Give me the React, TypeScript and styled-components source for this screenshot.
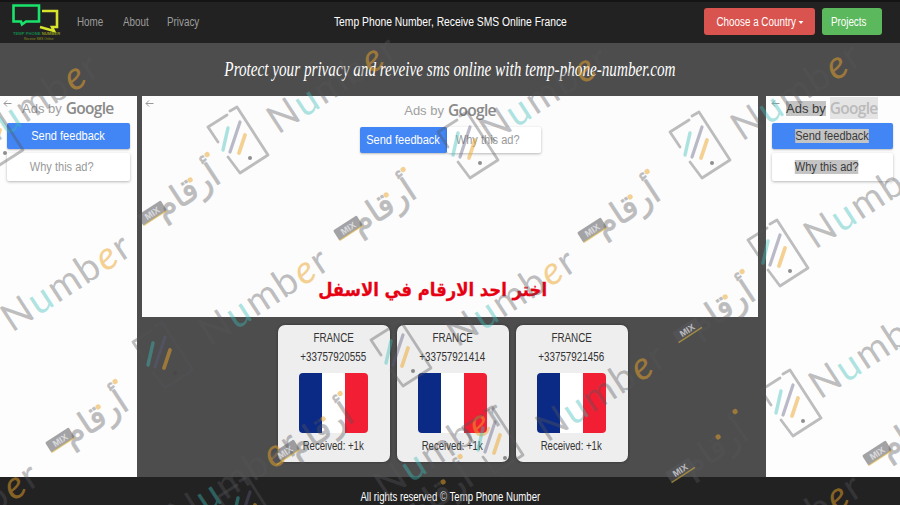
import React from "react";
import styled, { createGlobalStyle } from "styled-components";

const Global = createGlobalStyle`
  html, body { margin: 0; padding: 0; background: #4d4d4d; }
  * { box-sizing: border-box; }
`;

const Page = styled.div`
  position: relative;
  width: 900px;
  height: 505px;
  overflow: hidden;
  display: flex;
  flex-direction: column;
  background: #4d4d4d;
  font-family: "Liberation Sans", Arial, sans-serif;
`;

/* The reference is a horizontally squeezed capture: text keeps its height, loses width. */
const Squeeze = styled.span<{ $x?: number; $origin?: string }>`
  display: inline-block;
  white-space: nowrap;
  transform: scaleX(${(p) => p.$x ?? 0.82});
  transform-origin: ${(p) => p.$origin ?? "center"};
`;

const Header = styled.header`
  height: 43px;
  flex: none;
  display: grid;
  grid-template-columns: 1fr auto 1fr;
  align-items: center;
  background: #222;
  border-top: 2px solid #141414;
  padding: 0 18px 2px;
`;

const HeaderLeft = styled.div`
  display: flex;
  align-items: center;
  margin-left: -8px;
`;

const Nav = styled.nav`
  display: flex;
  gap: 13.5px;
  margin-left: 13px;
  font-size: 12px;
  color: #9d9d9d;
`;

const HeaderTitle = styled.div`
  color: #fff;
  font-size: 12px;
  display: flex;
  justify-content: center;
`;

const HeaderActions = styled.div`
  display: flex;
  justify-content: flex-end;
  gap: 7px;
`;

const ActionButton = styled.div<{ $tone: "red" | "green"; $w: number; $pr: number }>`
  width: ${(p) => p.$w}px;
  height: 27px;
  display: flex;
  align-items: center;
  justify-content: center;
  padding-right: ${(p) => p.$pr}px;
  border-radius: 3px;
  color: #fff;
  font-size: 12px;
  background: ${(p) => (p.$tone === "red" ? "#d9534f" : "#5cb85c")};
`;

const Caret = styled.span`
  display: inline-block;
  width: 0;
  height: 0;
  margin-left: 3px;
  vertical-align: middle;
  border-left: 3.5px solid transparent;
  border-right: 3.5px solid transparent;
  border-top: 3.5px solid #fff;
`;

const Band = styled.div`
  height: 53px;
  flex: none;
  display: flex;
  align-items: center;
  justify-content: center;
  padding-bottom: 1px;
  color: #fff;
  font-family: "Liberation Serif", serif;
  font-style: italic;
  font-weight: 400;
  font-size: 22px;
`;

const Main = styled.main`
  flex: 1;
  min-height: 0;
  display: grid;
  grid-template-columns: 137px 1fr 134px;
`;

const SideAd = styled.aside<{ $side: "left" | "right" }>`
  background: #fdfdfd;
  padding: ${(p) => (p.$side === "left" ? "0 7px" : "0 7px 0 6px")};
  position: relative;
`;

const CentreColumn = styled.div`
  display: flex;
  flex-direction: column;
  padding: 0 8px 0 5px;
`;

const CentreAd = styled.section`
  height: 221px;
  flex: none;
  background: #fcfcfc;
  position: relative;
  display: flex;
  flex-direction: column;
  align-items: center;
  padding-top: 2px;
`;

const BackArrow = styled.svg<{ $left: number }>`
  position: absolute;
  left: ${(p) => p.$left}px;
  top: 3px;
  width: 9px;
  height: 9px;
`;

const AdsBy = styled.div<{ $pad?: number }>`
  height: 24px;
  display: flex;
  align-items: center;
  gap: 4px;
  padding-left: ${(p) => p.$pad ?? 0}px;
  color: #a0a0a0;
  font-size: 13px;
`;

const Google = styled.span`
  font-family: "Open Sans", sans-serif;
  font-size: 15.5px;
  font-weight: 600;
  letter-spacing: -0.7px;
  color: #8a8a8a;
`;

const Marked = styled.span`
  background: #e4e4e4;
  color: #bbb;
`;

const MarkedDark = styled.span`
  color: #3a3a3a;
  background: #c4c4c4;
`;

const FeedbackStack = styled.div`
  display: flex;
  flex-direction: column;
  gap: 4px;
  margin-top: 3px;
`;

const FeedbackRow = styled.div`
  display: flex;
  margin-top: 5px;
`;

const Feedback = styled.div<{ $w?: number; $h: number }>`
  width: ${(p) => (p.$w ? `${p.$w}px` : "100%")};
  height: ${(p) => p.$h}px;
  display: flex;
  align-items: center;
  justify-content: center;
  background: #4285f4;
  color: #fff;
  font-size: 12px;
  border-radius: 2px;
  box-shadow: 0 1px 2px rgba(0, 0, 0, 0.25);
`;

const WhyAd = styled.div<{ $w?: number; $h: number; $pr: number }>`
  width: ${(p) => (p.$w ? `${p.$w}px` : "100%")};
  height: ${(p) => p.$h}px;
  display: flex;
  align-items: center;
  justify-content: center;
  padding-right: ${(p) => p.$pr}px;
  background: #fff;
  color: #999;
  font-size: 12px;
  border-radius: 2px;
  box-shadow: 0 1px 3px rgba(0, 0, 0, 0.28);
`;

const PickHeading = styled.h2`
  margin: auto 34px 15px 0;
  direction: rtl;
  color: #e60012;
  font-family: "DejaVu Sans", sans-serif;
  font-size: 18.5px;
  font-weight: 700;
  line-height: 24px;
  transform: scaleX(0.89);
  -webkit-text-stroke: 0.3px #e60012;
`;

const Cards = styled.div`
  flex: 1;
  display: flex;
  justify-content: center;
  gap: 7px;
  padding: 8px 0 0 5px;
`;

const Card = styled.article`
  width: 112px;
  height: 137px;
  display: flex;
  flex-direction: column;
  align-items: center;
  padding-top: 6px;
  background: #eee;
  border-radius: 7px;
  box-shadow: 0 0 3px rgba(0, 0, 0, 0.4);
  color: #333;
  font-size: 12px;
  line-height: 14px;
`;

const CardPhone = styled.div`
  margin-top: 5px;
`;

const Flag = styled.div`
  width: 69px;
  height: 60px;
  margin-top: 9px;
  border-radius: 4px;
  overflow: hidden;
  display: grid;
  grid-template-columns: 1fr 1fr 1fr;
`;

const Stripe = styled.span<{ $c: string }>`
  background: ${(p) => p.$c};
`;

const Received = styled.div`
  margin-top: 6px;
`;

const Footer = styled.footer`
  height: 28px;
  flex: none;
  display: flex;
  align-items: flex-end;
  justify-content: center;
  padding-bottom: 1px;
  background: #222;
  color: #fff;
  font-size: 12px;
`;

const WatermarkSvg = styled.svg`
  position: absolute;
  inset: 0;
  width: 900px;
  height: 505px;
  pointer-events: none;
`;

const Logo = () => (
  <svg width="54" height="39" viewBox="0 0 54 39" style={{ display: "block" }}>
    <path d="M3.5 3.5h25.5v16H16l-4 3-1-3H3.5z" fill="none" stroke="#19e36a" strokeWidth="2.6" />
    <path d="M32 9h15v16h-5l2 4-14-4" fill="none" stroke="#d8e32c" strokeWidth="2.6" />
    <text x="3" y="33" fontSize="4.2" fill="#12854a" fontFamily="Liberation Sans" fontWeight="700">
      TEMP PHONE <tspan fill="#8c9420">NUMBER</tspan>
    </text>
    <text x="14" y="38" fontSize="3.2" fill="#8c9420" fontFamily="Liberation Sans">
      Receive SMS Online
    </text>
  </svg>
);

const Arrow = ({ left }: { left: number }) => (
  <BackArrow $left={left} viewBox="0 0 9 9">
    <path d="M8.5 4.5H1M4 1.5l-3 3 3 3" fill="none" stroke="#999" strokeWidth="1" />
  </BackArrow>
);

const GREY = "rgba(85,85,90,0.38)";
const TEAL = "rgba(60,190,185,0.42)";
const ORANGE = "rgba(235,165,40,0.5)";

const WmNumber = ({ x, y }: { x: number; y: number }) => (
  <text
    transform={`translate(${x} ${y}) rotate(-33)`}
    fontFamily="Lato, sans-serif"
    fontSize="39"
    fontWeight="400"
    letterSpacing="1.5"
    fill={GREY}
  >
    N<tspan fill={TEAL}>u</tspan>mb<tspan fill={ORANGE} fontStyle="italic">e</tspan>r
  </text>
);

const WmArabic = ({ x, y }: { x: number; y: number }) => (
  <g transform={`translate(${x} ${y}) rotate(-33)`}>
    <text
      x="5"
      y="12"
      fontFamily="'DejaVu Sans', sans-serif"
      fontSize="33"
      fill="#55555a"
      stroke="#55555a"
      strokeWidth="0.7"
      opacity="0.38"
    >
      أرقام
    </text>
    <rect x="-14" y="-6" width="28" height="12" rx="1.5" fill="rgba(90,90,95,0.55)" />
    <path d="M-14 6h28" stroke="rgba(225,185,60,0.55)" strokeWidth="1.4" />
    <text x="0" y="3.5" textAnchor="middle" fontFamily="Liberation Sans" fontSize="9" fontWeight="700" fill="#fff" opacity="0.6">
      MIX
    </text>
    <circle cx="50" cy="-7" r="2.6" fill={ORANGE} />
    <circle cx="78" cy="-19" r="2.6" fill={ORANGE} />
  </g>
);

const WmPhone = ({ x, y }: { x: number; y: number }) => (
  <g transform={`translate(${x} ${y})`} fill="none" strokeLinecap="round" strokeLinejoin="round">
    <path d="M-13-25-32-13-22 2M-12 17 0 33 28 15-3-33-10-29" stroke={GREY} strokeWidth="2.8" />
    <path d="M-17 10-12-12" stroke={TEAL} strokeWidth="3.4" />
    <path d="M-10 12 0-18" stroke="rgba(90,90,125,0.42)" strokeWidth="3.2" />
    <path d="M-1 13 5-5" stroke={ORANGE} strokeWidth="3.8" />
    <circle cx="10" cy="18" r="2" fill="rgba(70,70,75,0.6)" />
  </g>
);

const numbers = [
  [12, 333], [210, 347], [457, 348], [-80, 562], [180, 530], [547, 443], [743, 573],
  [-20, 153], [278, 135], [490, 145], [742, 142], [815, 250], [820, 400], [385, 500],
];
const arabics = [
  [152, 213], [348, 228], [592, 230], [60, 440], [687, 330], [680, 470], [877, 453], [285, 452], [405, 515],
];
const phones = [
  [-5, 135], [240, 140], [470, 145], [702, 145], [780, 253], [793, 403], [165, 355], [403, 353], [495, 440], [250, 510],
];

const Watermark = () => (
  <WatermarkSvg viewBox="0 0 900 505">
    {numbers.map(([x, y]) => (
      <WmNumber key={`n${x}${y}`} x={x} y={y} />
    ))}
    {arabics.map(([x, y]) => (
      <WmArabic key={`a${x}${y}`} x={x} y={y} />
    ))}
    {phones.map(([x, y]) => (
      <WmPhone key={`p${x}${y}`} x={x} y={y} />
    ))}
  </WatermarkSvg>
);

const phonesList = ["+33757920555", "+33757921414", "+33757921456"];

export default function App() {
  return (
    <Page>
      <Global />
      <Header>
        <HeaderLeft>
          <Logo />
          <Nav>
            <Squeeze $origin="left">Home</Squeeze>
            <Squeeze $origin="left">About</Squeeze>
            <Squeeze $origin="left">Privacy</Squeeze>
          </Nav>
        </HeaderLeft>
        <HeaderTitle>
          <Squeeze $x={0.86}>Temp Phone Number, Receive SMS Online France</Squeeze>
        </HeaderTitle>
        <HeaderActions>
          <ActionButton $tone="red" $w={111} $pr={0}>
            <Squeeze>
              Choose a Country
              <Caret />
            </Squeeze>
          </ActionButton>
          <ActionButton $tone="green" $w={60} $pr={7}>
            <Squeeze>Projects</Squeeze>
          </ActionButton>
        </HeaderActions>
      </Header>
      <Band>
        <Squeeze $x={0.69}>Protect your privacy and reveive sms online with temp-phone-number.com</Squeeze>
      </Band>
      <Main>
        <SideAd $side="left">
          <Arrow left={3} />
          <AdsBy $pad={15}>
            Ads by <Google>Google</Google>
          </AdsBy>
          <FeedbackStack>
            <Feedback $h={26}>
              <Squeeze $x={0.92}>Send feedback</Squeeze>
            </Feedback>
            <WhyAd $h={28} $pr={14}>
              <Squeeze $x={0.92}>Why this ad?</Squeeze>
            </WhyAd>
          </FeedbackStack>
        </SideAd>
        <CentreColumn>
          <CentreAd>
            <Arrow left={3} />
            <AdsBy>
              Ads by <Google>Google</Google>
            </AdsBy>
            <FeedbackRow>
              <Feedback $w={87} $h={26}>
                <Squeeze $x={0.92}>Send feedback</Squeeze>
              </Feedback>
              <WhyAd $w={94} $h={26} $pr={12}>
                <Squeeze $x={0.92}>Why this ad?</Squeeze>
              </WhyAd>
            </FeedbackRow>
            <PickHeading>اختر احد الارقام في الاسفل</PickHeading>
          </CentreAd>
          <Cards>
            {phonesList.map((n) => (
              <Card key={n}>
                <Squeeze>FRANCE</Squeeze>
                <CardPhone>
                  <Squeeze>{n}</Squeeze>
                </CardPhone>
                <Flag>
                  <Stripe $c="#0b2a85" />
                  <Stripe $c="#ffffff" />
                  <Stripe $c="#f21f34" />
                </Flag>
                <Received>
                  <Squeeze $x={0.8}>Received: +1k</Squeeze>
                </Received>
              </Card>
            ))}
          </Cards>
        </CentreColumn>
        <SideAd $side="right">
          <Arrow left={5} />
          <AdsBy $pad={14}>
            <MarkedDark>Ads by</MarkedDark>
            <Google>
              <Marked>Google</Marked>
            </Google>
          </AdsBy>
          <FeedbackStack>
            <Feedback $h={26}>
              <Squeeze $x={0.92}>
                <MarkedDark>Send feedback</MarkedDark>
              </Squeeze>
            </Feedback>
            <WhyAd $h={28} $pr={12}>
              <Squeeze $x={0.92}>
                <MarkedDark>Why this ad?</MarkedDark>
              </Squeeze>
            </WhyAd>
          </FeedbackStack>
        </SideAd>
      </Main>
      <Footer>
        <Squeeze $x={0.8}>All rights reserved © Temp Phone Number</Squeeze>
      </Footer>
      <Watermark />
    </Page>
  );
}
